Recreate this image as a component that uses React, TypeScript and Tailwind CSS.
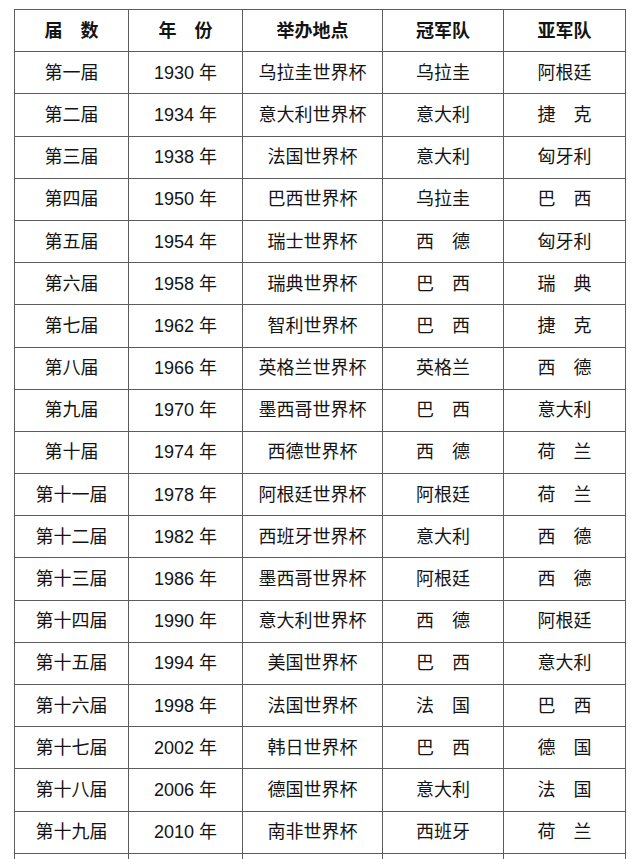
const rows: [string, string, string, string, string][] = [
  ['第一届', '1930', '乌拉圭世界杯', '乌拉圭', '阿根廷'],
  ['第二届', '1934', '意大利世界杯', '意大利', '捷　克'],
  ['第三届', '1938', '法国世界杯', '意大利', '匈牙利'],
  ['第四届', '1950', '巴西世界杯', '乌拉圭', '巴　西'],
  ['第五届', '1954', '瑞士世界杯', '西　德', '匈牙利'],
  ['第六届', '1958', '瑞典世界杯', '巴　西', '瑞　典'],
  ['第七届', '1962', '智利世界杯', '巴　西', '捷　克'],
  ['第八届', '1966', '英格兰世界杯', '英格兰', '西　德'],
  ['第九届', '1970', '墨西哥世界杯', '巴　西', '意大利'],
  ['第十届', '1974', '西德世界杯', '西　德', '荷　兰'],
  ['第十一届', '1978', '阿根廷世界杯', '阿根廷', '荷　兰'],
  ['第十二届', '1982', '西班牙世界杯', '意大利', '西　德'],
  ['第十三届', '1986', '墨西哥世界杯', '阿根廷', '西　德'],
  ['第十四届', '1990', '意大利世界杯', '西　德', '阿根廷'],
  ['第十五届', '1994', '美国世界杯', '巴　西', '意大利'],
  ['第十六届', '1998', '法国世界杯', '法　国', '巴　西'],
  ['第十七届', '2002', '韩日世界杯', '巴　西', '德　国'],
  ['第十八届', '2006', '德国世界杯', '意大利', '法　国'],
  ['第十九届', '2010', '南非世界杯', '西班牙', '荷　兰'],
];

const headers = ['届　数', '年　份', '举办地点', '冠军队', '亚军队'];

const cell = 'border-[1.5px] border-[#5c5c5c] p-0 text-center align-middle';

export default function App() {
  return (
    <div
      className="min-h-screen bg-white pl-[14px] pt-[9px] text-[18px] leading-none text-[#141414]"
      style={{ fontFamily: '"Liberation Sans", "Noto Sans CJK SC", sans-serif' }}
    >
      <table className="w-[611px] table-fixed border-collapse">
        <colgroup>
          <col className="w-[114px]" />
          <col className="w-[114px]" />
          <col className="w-[140px]" />
          <col className="w-[121px]" />
          <col className="w-[122px]" />
        </colgroup>
        <thead>
          <tr className="h-[42.2px]">
            {headers.map((h) => (
              <th key={h} className={`${cell} font-bold`}>
                {h}
              </th>
            ))}
          </tr>
        </thead>
        <tbody>
          {rows.map(([edition, year, host, winner, runnerUp]) => (
            <tr key={edition} className="h-[42.2px]">
              <td className={cell}>{edition}</td>
              <td className={cell}>{year} 年</td>
              <td className={cell}>{host}</td>
              <td className={cell}>{winner}</td>
              <td className={cell}>{runnerUp}</td>
            </tr>
          ))}
          {/* 다음 행은 화면 아래로 잘려 선만 보인다 */}
          <tr className="h-[42.2px]">
            <td className={cell} />
            <td className={cell} />
            <td className={cell} />
            <td className={cell} />
            <td className={cell} />
          </tr>
        </tbody>
      </table>
    </div>
  );
}
